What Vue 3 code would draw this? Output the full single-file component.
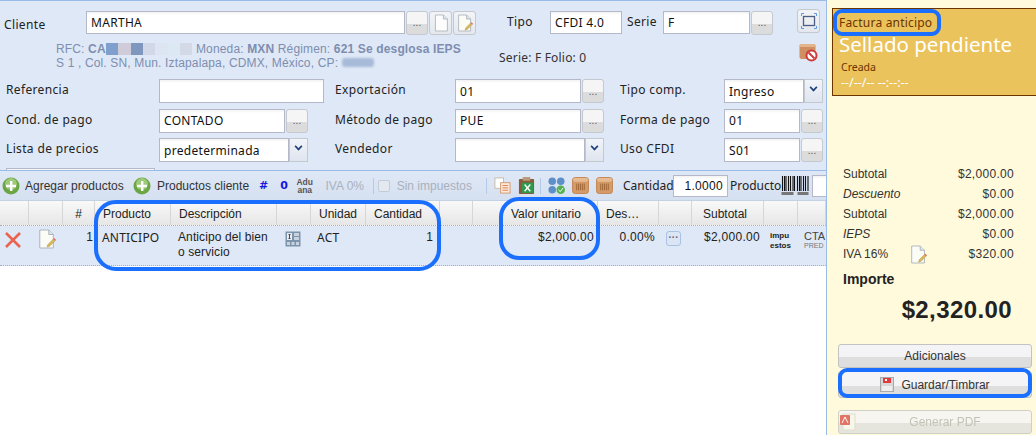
<script setup>
const columns = [
  { name: "", width: 29 }, { name: "", width: 34 }, { name: "#", width: 32, cls: "center" },
  { name: "Producto", width: 76 }, { name: "Descripción", width: 106 }, { name: "", width: 34 },
  { name: "Unidad", width: 55 }, { name: "Cantidad", width: 74 }, { name: "", width: 33 },
  { name: "Valor unitario", width: 125, cls: "pad" }, { name: "Des…", width: 61 }, { name: "", width: 33 },
  { name: "Subtotal", width: 72, cls: "pad-sub" }, { name: "", width: 34 }, { name: "", width: 28 },
];

const totals = [
  { label: "Subtotal", value: "$2,000.00" },
  { label: "Descuento", value: "$0.00", italic: true },
  { label: "Subtotal", value: "$2,000.00" },
  { label: "IEPS", value: "$0.00", italic: true },
  { label: "IVA 16%", value: "$320.00", icon: true },
];

const blurs = ["#7f9fcc", "#cfcbd8", "#7f96bf", "#d2d8e8", "#dde5f2", "#dce8f3", "#d3d9e6"];
</script>

<template>
  <div class="page">
    <svg class="defs" width="0" height="0">
      <symbol id="doc" viewBox="0 0 20 22">
        <path d="M3 1h10l5 5v15H3z" fill="#fdfdfd" stroke="#a5adb6" />
        <path d="M13 1v5h5" fill="#dfe6ee" stroke="#a5adb6" />
      </symbol>
      <symbol id="docedit" viewBox="0 0 20 22">
        <path d="M2 1h10l5 5v15H2z" fill="#fbfcf6" stroke="#a5adb6" />
        <path d="M12 1v5h5" fill="#dfe6ee" stroke="#a5adb6" />
        <path d="M10 20l1-3 6-6 2 2-6 6z" fill="#dcb958" stroke="#a8924c" stroke-width=".5" />
        <path d="M17 11l1-1 2 2-1 1z" fill="#e0606a" />
      </symbol>
      <symbol id="plus" viewBox="0 0 18 18">
        <circle cx="9" cy="9" r="8.500" fill="#6ca544" />
        <circle cx="9" cy="7" r="6" fill="#9cc97a" />
        <path d="M8 4h2.400v3.800H14v2.400h-3.600V14H8v-3.800H4V7.800h4z" fill="#fff" />
      </symbol>
      <symbol id="crate" viewBox="0 0 18 18">
        <rect x="0.500" y="0.500" width="17" height="17" rx="3" fill="#d69a66" stroke="#c08654" />
        <rect x="1" y="1" width="16" height="4" rx="2" fill="#e6bb92" />
        <path d="M5 7v7M7 7v7M9 7v7M11 7v7M13 7v7" stroke="#9c6636" />
      </symbol>
    </svg>

    <div class="main">
      <section class="form">
        <div class="client-row">
          <label class="lbl client-lbl">Cliente</label>
          <input class="inp client-inp" value="MARTHA" readonly />
          <button class="dots">...</button>
          <button class="tool"><svg width="16" height="18"><use href="#doc" /></svg></button>
          <button class="tool"><svg width="16" height="18"><use href="#docedit" /></svg></button>
          <label class="lbl tipo-lbl">Tipo</label>
          <input class="inp tipo-inp" value="CFDI 4.0" readonly />
          <label class="lbl serie-lbl">Serie</label>
          <input class="inp serie-inp" value="F" readonly />
          <button class="dots">...</button>
          <button class="tool expand">
            <svg width="16" height="16" viewBox="0 0 16 16" fill="none">
              <rect x="2.500" y="3.500" width="11" height="9" stroke="#4b5f86" stroke-width="1.300" />
              <path d="M0.500 3V.5H3M13 .5h2.500V3M.5 13v2.500H3M13 15.500h2.500V13" stroke="#5d9be0" />
            </svg>
          </button>
        </div>

        <div class="info-row">
          <div class="info">
            <div class="info-line">
              RFC: <b>CA</b><span class="blur-set"><i v-for="(c, n) in blurs" :key="n" :style="{ background: c }"></i></span>
              Moneda: <b>MXN</b> Régimen: <b>621 Se desglosa IEPS</b>
            </div>
            <div class="info-line">S 1 , Col. SN, Mun. Iztapalapa, CDMX, México, CP: <span class="cp-blur"></span></div>
          </div>
          <div class="folio">Serie: F Folio: 0</div>
          <svg class="cancel-icon" width="19" height="19" viewBox="0 0 19 19">
            <rect x="0.500" y="1" width="16" height="15" rx="2" fill="#cf8f62" />
            <rect x="0.500" y="1" width="16" height="3" rx="1.500" fill="#e4b48e" />
            <circle cx="12.500" cy="12.500" r="5" fill="#fff" stroke="#cf3a3a" stroke-width="2" />
            <path d="M9.500 9.500l6 6" stroke="#cf3a3a" stroke-width="2" />
          </svg>
        </div>

        <div class="fields">
          <label class="lbl">Referencia</label>
          <div><input class="inp f-wide" readonly /></div>
          <label class="lbl mid">Exportación</label>
          <div><input class="inp grow" value="01" readonly /><button class="dots">...</button></div>
          <label class="lbl end">Tipo comp.</label>
          <div><input class="inp grow" value="Ingreso" readonly /><button class="arrow"><span></span></button></div>

          <label class="lbl">Cond. de pago</label>
          <div class="narrow"><input class="inp grow" value="CONTADO" readonly /><button class="dots">...</button></div>
          <label class="lbl mid">Método de pago</label>
          <div><input class="inp grow" value="PUE" readonly /><button class="dots">...</button></div>
          <label class="lbl end">Forma de pago</label>
          <div><input class="inp grow" value="01" readonly /><button class="dots">...</button></div>

          <label class="lbl">Lista de precios</label>
          <div class="narrow"><input class="inp grow" value="predeterminada" readonly /><button class="arrow"><span></span></button></div>
          <label class="lbl mid">Vendedor</label>
          <div><input class="inp grow" readonly /><button class="arrow"><span></span></button></div>
          <label class="lbl end">Uso CFDI</label>
          <div><input class="inp grow" value="S01" readonly /><button class="dots">...</button></div>
        </div>
        <div class="stub"></div>
      </section>

      <div class="toolbar">
        <svg class="plus" width="18" height="18"><use href="#plus" /></svg>
        <span class="tb-text t1">Agregar productos</span>
        <svg class="plus" width="18" height="18"><use href="#plus" /></svg>
        <span class="tb-text t2">Productos cliente</span>
        <b class="hash">#</b>
        <b class="hash zero">0</b>
        <span class="aduana">Adu<br />ana</span>
        <span class="iva">IVA 0%</span>
        <i class="sep"></i>
        <span class="check"></span>
        <span class="sin">Sin impuestos</span>
        <i class="sep"></i>
        <svg class="ti" width="17" height="17" viewBox="0 0 18 18">
          <rect x="1" y="1" width="9" height="11" fill="#fff" stroke="#c9b9a6" />
          <rect x="7" y="6" width="10" height="11" fill="#fbe9dc" stroke="#d49a72" />
          <path d="M9 9h6M9 11.500h6M9 14h6" stroke="#dd7f4a" />
        </svg>
        <svg class="ti" width="17" height="19" viewBox="0 0 18 20">
          <rect x="1" y="3" width="16" height="16" rx="1" fill="#8a5a3c" />
          <rect x="5" y="1" width="8" height="4" fill="#b89a7c" />
          <rect x="4" y="7" width="12" height="11" fill="#2f9a4c" />
          <path d="M7 9l6 7M13 9l-6 7" stroke="#fff" stroke-width="1.500" />
        </svg>
        <i class="sep sep-b"></i>
        <svg class="ti" width="17" height="17" viewBox="0 0 18 18">
          <circle cx="4.500" cy="4.500" r="4" fill="#5d8fc9" /><circle cx="13.500" cy="4.500" r="4" fill="#5d8fc9" />
          <circle cx="4.500" cy="13.500" r="4" fill="#5d8fc9" /><circle cx="13.500" cy="13.500" r="4.500" fill="#52b04f" />
          <path d="M11 13.500l2 2 3-4" stroke="#fff" fill="none" />
        </svg>
        <svg class="ti" width="17" height="17"><use href="#crate" /></svg>
        <svg class="ti" width="17" height="17"><use href="#crate" /></svg>
        <span class="tb-dark qty">Cantidad</span>
        <input class="inp qty-inp" value="1.0000" readonly />
        <span class="tb-dark prod">Producto</span>
        <svg class="barcode" width="29" height="20" viewBox="0 0 28 20">
          <path d="M1 0v15M3 0v15M4.500 0v15M7 0v15M9 0v15M11.500 0v15M13 0v15M16 0v15M18 0v15M19.500 0v15M22 0v15M24 0v15M26.500 0v15" stroke="#111" stroke-width="1.100" />
          <rect x="0" y="16" width="12" height="3" fill="#777" /><rect x="16" y="16" width="11" height="3" fill="#777" />
        </svg>
        <input class="inp prod-inp" readonly />
      </div>

      <div class="thead">
        <div v-for="(col, n) in columns" :key="n" class="th" :class="col.cls" :style="{ width: col.width + 'px' }">{{ col.name }}</div>
      </div>
      <div class="trow">
        <div class="td c-del">
          <svg width="18" height="18" viewBox="0 0 18 18"><path d="M2 2l14 14M16 2L2 16" stroke="#e9634f" stroke-width="2.600" /></svg>
        </div>
        <div class="td c-edit"><svg width="18" height="20"><use href="#docedit" /></svg></div>
        <div class="td c-num">1</div>
        <div class="td c-prod">ANTICIPO</div>
        <div class="td c-desc">Anticipo del bien o servicio</div>
        <div class="td c-grid">
          <svg width="16" height="16" viewBox="0 0 16 16">
            <rect x="0.500" y="0.500" width="15" height="15" fill="#7d94ad" />
            <rect x="2" y="2" width="5" height="7" fill="#e9eef4" /><rect x="9" y="2" width="5" height="3" fill="#c8d3df" />
            <rect x="9" y="6" width="5" height="3" fill="#c8d3df" /><rect x="2" y="11" width="3" height="3" fill="#c8d3df" />
            <rect x="6.500" y="11" width="3" height="3" fill="#c8d3df" /><rect x="11" y="11" width="3" height="3" fill="#c8d3df" />
            <path d="M3.500 3.500h2M4.500 3.500v4M3.500 7.500h2" stroke="#445" />
          </svg>
        </div>
        <div class="td c-unit">ACT</div>
        <div class="td c-qty">1</div>
        <div class="td c-blank"></div>
        <div class="td c-price">$2,000.00</div>
        <div class="td c-disc">0.00%</div>
        <div class="td c-more"><span class="more">···</span></div>
        <div class="td c-sub">$2,000.00</div>
        <div class="td c-imp">impu<br />estos</div>
        <div class="td c-cta">CTA<small>PRED</small></div>
      </div>
    </div>

    <aside class="side">
      <div class="status">
        <div class="st-title">Factura anticipo</div>
        <div class="st-big">Sellado pendiente</div>
        <div class="st-small">Creada</div>
        <div class="st-date">--/--/-- --:--:--</div>
      </div>

      <div class="totals">
        <div v-for="(t, n) in totals" :key="n" class="total-row" :class="{ italic: t.italic }">
          <span class="t-label">{{ t.label }}</span>
          <svg v-if="t.icon" class="t-icon" width="17" height="19"><use href="#docedit" /></svg>
          <span class="t-value">{{ t.value }}</span>
        </div>
      </div>
      <div class="importe">Importe</div>
      <div class="grand">$2,320.00</div>

      <div class="buttons">
        <button class="big">Adicionales</button>
        <button class="big save">
          <svg width="14" height="15" viewBox="0 0 14 15">
            <rect x="0.500" y="0.500" width="13" height="14" fill="#d8d8d8" stroke="#aaa" />
            <rect x="3" y="1" width="8" height="5" fill="#e23b3b" /><rect x="5" y="2" width="2" height="2" fill="#fff" />
            <rect x="2" y="9" width="10" height="5" fill="#eee" />
          </svg>
          Guardar/Timbrar
        </button>
        <button class="big off">
          <svg class="pdf" width="16" height="18" viewBox="0 0 16 18">
            <rect x="3" y="1" width="12" height="16" fill="#f6f6ee" stroke="#d2d6cf" />
            <rect x="0" y="2" width="10" height="10" rx="1" fill="#d9483f" />
            <path d="M2 10l3-6 3 6" stroke="#fff" fill="none" />
          </svg>
          Generar PDF
        </button>
      </div>
    </aside>

    <div class="mark m-factura"></div>
    <div class="mark m-product"></div>
    <div class="mark m-price"></div>
    <div class="mark m-save"></div>
  </div>
</template>

<style>
html, body { margin: 0; overflow: hidden; background: #fff; }
</style>

<style scoped>
.page {
  position: relative;
  display: flex;
  width: 1036px;
  height: 435px;
  overflow: hidden;
  font-family: "DejaVu Sans", sans-serif;
  font-size: 12px;
  color: #222;
}
.defs { position: absolute; }

.main {
  width: 826px;
  border-right: 1px solid #99bbe8;
  background: #fff;
}
.form {
  height: 170px;
  box-sizing: border-box;
  border-top: 1px solid #99bbe8;
  background: #dfe8f6;
  position: relative;
  overflow: hidden;
}
.lbl { font-family: "Noto Sans", sans-serif; font-size: 12px; letter-spacing: .35px; color: #222; white-space: nowrap; }

.inp {
  box-sizing: border-box;
  height: 23px;
  margin: 0;
  padding: 0 4px;
  border: 1px solid #b5b8c8;
  background: linear-gradient(#f2f2f2, #fff 3px);
  font-family: "Noto Sans", sans-serif;
  font-size: 12px;
  letter-spacing: .3px;
  color: #111;
  outline: none;
}
.grow { flex: 1; min-width: 0; }

.dots, .arrow, .tool {
  box-sizing: border-box;
  height: 24px;
  margin: 0;
  padding: 0;
  border: 1px solid #c4c8cf;
  border-radius: 3px;
  background: linear-gradient(#f5f5f5 0 55%, #dcdcdc 55%);
  color: #555;
  font-size: 10px;
  flex: none;
}
.dots { width: 22px; margin-left: 1px; }
.tool { width: 23px; margin-left: 1px; display: flex; align-items: center; justify-content: center; background: linear-gradient(#f3f4f6, #e4e8ee); }
.arrow { width: 19px; height: 24px; border-radius: 0; background: linear-gradient(#f1f4f9, #dfe5ef); display: flex; justify-content: center; padding-top: 4px; }
.arrow span { width: 7px; height: 7px; box-sizing: border-box; border-right: 2px solid #1f3f78; border-bottom: 2px solid #1f3f78; transform: rotate(45deg) scale(.8); }

.client-row { display: flex; align-items: center; height: 23px; margin-top: 10px; padding-left: 4px; }
.client-lbl { width: 82px; padding-top: 3px; }
.client-inp { width: 319px; }
.tipo-lbl { margin-left: 31px; width: 43px; margin-top: -3px; }
.tipo-inp { width: 72px; }
.serie-lbl { margin-left: 5px; width: 36px; margin-top: -3px; }
.serie-inp { width: 87px; }
.expand { margin-left: 24px; margin-top: -4px; }

.info-row { display: flex; height: 30px; margin-top: 8px; padding-left: 56px; position: relative; }
.info { width: 443px; font-family: "Liberation Sans", sans-serif; font-size: 12px; line-height: 14px; letter-spacing: .15px; color: #7d8eb0; white-space: nowrap; }
.info-line { height: 14px; }
.blur-set { display: inline-flex; height: 12px; vertical-align: -2px; }
.blur-set i { width: 12.400px; }
.cp-blur { display: inline-block; width: 32px; height: 9px; background: #a7bbd8; border-radius: 3px; filter: blur(1px); }
.folio { font-family: "Noto Sans", sans-serif; font-size: 12px; letter-spacing: .2px; padding-top: 7px; color: #333; }
.cancel-icon { position: absolute; left: 799px; top: 1px; }

.fields {
  display: grid;
  grid-template-columns: 153px 165px 131px 149px 120px 99px;
  grid-auto-rows: 24px;
  row-gap: 5.500px;
  align-items: center;
  margin: 7px 0 0 6px;
}
.fields > div { display: flex; align-items: center; height: 24px; }
.fields .inp { height: 24px; }
.fields .lbl { margin-top: -3px; }
.f-wide { width: 165px; }
.narrow { width: 149px; }
.mid { padding-left: 11px; }
.end { padding-left: 16px; }
.stub { margin: 6px 0 0 6px; width: 147px; height: 10px; border: 1px solid #b5b8c8; background: #f7f7f7; }

.toolbar {
  display: flex;
  align-items: center;
  height: 31px;
  padding-left: 2px;
  box-sizing: border-box;
  border-top: 1px solid #99bbe8;
  border-bottom: 1px solid #c5d2e4;
  background: linear-gradient(#dfe8f6, #d5e0f0);
  font-family: "Liberation Sans", sans-serif;
  white-space: nowrap;
}
.plus { flex: none; }
.tb-text { color: #333; margin-left: 5px; font-size: 12px; }
.t1 { width: 110px; }
.t2 { width: 104px; margin-left: 6px; }
.hash { color: #1515e0; font-family: "DejaVu Sans", sans-serif; font-size: 11px; }
.zero { margin-left: 12px; }
.aduana { font-size: 8.500px; line-height: 8px; font-weight: bold; color: #555; margin-left: 4px; width: 26px; text-align: center; }
.iva { color: #a9b1bd; margin-left: 8px; width: 48px; }
.sep { width: 1px; height: 16px; background: #b4cbe8; flex: none; }
.sep-b { margin-left: 5px; }
.check { width: 12px; height: 12px; margin-left: 4px; border: 1px solid #c2cbd8; border-radius: 2px; background: #e4e9f0; flex: none; box-sizing: border-box; }
.sin { color: #a9b1bd; margin-left: 7px; width: 91px; }
.ti { margin-left: 7px; flex: none; }
.tb-dark { color: #222; font-size: 12px; }
.qty { margin-left: 10px; width: 50px; font-family: "Noto Sans", sans-serif; }
.qty-inp { width: 55px; height: 22px; text-align: right; font-family: "Liberation Sans", sans-serif; flex: none; }
.prod { margin-left: 2px; width: 51px; font-family: "Noto Sans", sans-serif; }
.barcode { flex: none; margin-right: 2px; }
.prod-inp { width: 14px; height: 22px; border-right: none; flex: none; }

.thead { display: flex; height: 24px; background: linear-gradient(#f9f9f9, #e6e6e6); border-bottom: 1px dotted #aab; }
.th { box-sizing: border-box; flex: none; padding: 6px 0 0 8px; border-right: 1px solid #d6d6d6; font-family: "Liberation Sans", sans-serif; font-size: 12px; color: #222; white-space: nowrap; }
.th.center { text-align: center; padding-left: 0; }
.th.pad { padding-left: 38px; }
.th.pad-sub { padding-left: 11px; }

.trow { position: relative; display: flex; height: 39px; background: #dfe8f6; border-bottom: 1px dotted #aab; }
.td { box-sizing: border-box; flex: none; padding-top: 4px; font-family: "Liberation Sans", sans-serif; font-size: 12px; line-height: 15px; color: #222; }
.c-del { width: 29px; padding: 5px 0 0 4px; }
.c-edit { width: 34px; padding: 3px 0 0 9px; }
.c-num { width: 32px; text-align: right; padding-right: 2px; }
.c-prod { width: 76px; padding-left: 7px; font-family: "Noto Sans", sans-serif; letter-spacing: .2px; }
.c-desc { width: 106px; padding: 4px 6px 0 7px; letter-spacing: .1px; }
.c-grid { width: 34px; padding: 5px 0 0 8px; }
.c-unit { width: 55px; padding-left: 6px; font-family: "Noto Sans", sans-serif; letter-spacing: .2px; }
.c-qty { width: 74px; text-align: right; padding-right: 7px; }
.c-blank { width: 33px; }
.c-price { width: 125px; text-align: right; padding-right: 4px; letter-spacing: .3px; }
.c-disc { width: 61px; text-align: right; padding-right: 4px; letter-spacing: .3px; }
.c-more { width: 33px; padding: 5px 0 0 7px; }
.more { display: block; width: 15px; height: 15px; box-sizing: border-box; border: 1px solid #a9c2e2; border-radius: 3px; background: #dbe5f3; color: #667; font-size: 10px; line-height: 12px; text-align: center; font-weight: bold; }
.c-sub { width: 72px; text-align: right; padding-right: 4px; letter-spacing: .3px; }
.c-imp { width: 34px; padding: 5px 0 0 6px; font-size: 8px; line-height: 10px; font-weight: bold; }
.c-cta { width: 28px; padding: 6px 0 0 6px; font-size: 11px; line-height: 9px; color: #444; }
.c-cta small { display: block; font-size: 7px; color: #777; }

.side { width: 209px; background: #fffadc; font-family: "Liberation Sans", sans-serif; }
.status {
  box-sizing: border-box;
  height: 88px;
  margin: 8px 0 0 5px;
  padding: 6px 0 0 6px;
  border: 1px solid #6b3300;
  border-right: none;
  background: #ebc35c;
}
.st-title { font-family: "Noto Sans", sans-serif; font-size: 12px; letter-spacing: .2px; color: #6b3300; line-height: 16px; }
.st-big { font-family: "Noto Sans", sans-serif; font-size: 20.500px; color: #fff; line-height: 24px; margin-top: 1px; white-space: nowrap; }
.st-small { font-family: "Noto Sans", sans-serif; font-size: 10.500px; color: #6b3300; margin: 4px 0 0 2px; line-height: 14px; }
.st-date { font-family: "Noto Sans", sans-serif; font-size: 12.500px; color: #fff; margin: 1px 0 0 2px; line-height: 15px; }

.totals { margin: 68px 22px 0 16px; }
.total-row { display: flex; height: 20px; align-items: center; font-size: 12px; color: #333; }
.total-row.italic .t-label { font-style: italic; }
.t-label { flex: 1; }
.t-icon { position: absolute; left: 910px; }
.t-value { letter-spacing: .3px; }
.importe { margin: 6px 0 0 16px; font-size: 14px; font-weight: bold; color: #222; line-height: 18px; }
.grand { margin: 8px 24px 0 0; text-align: right; font-size: 24px; font-weight: bold; color: #222; line-height: 28px; letter-spacing: .4px; }

.buttons { margin: 20px 4px 0 11px; display: flex; flex-direction: column; }
.big {
  display: flex;
  align-items: center;
  justify-content: center;
  gap: 7px;
  height: 24px;
  flex: none;
  padding: 0;
  margin: 0 0 3px;
  border: 1px solid #c2c2c2;
  border-radius: 3px;
  background: linear-gradient(#f4f4f6 0 55%, #dedede 55%);
  font-family: "Liberation Sans", sans-serif;
  font-size: 12px;
  color: #333;
}
.save { height: 27px; }
.off { position: relative; margin-top: 9px; padding-left: 20px; color: #b0b0aa; opacity: .75; }
.pdf { position: absolute; left: 1px; top: 2px; }

.mark { position: absolute; box-sizing: border-box; border: 4px solid #1a6fff; pointer-events: none; }
.m-factura { left: 833px; top: 9px; width: 108px; height: 27px; border-radius: 9px; }
.m-product { left: 94px; top: 200px; width: 347px; height: 71px; border-radius: 22px; }
.m-price { left: 499px; top: 197px; width: 101px; height: 63px; border-radius: 20px; }
.m-save { left: 838px; top: 368px; width: 194px; height: 30px; border-radius: 9px; }
</style>
